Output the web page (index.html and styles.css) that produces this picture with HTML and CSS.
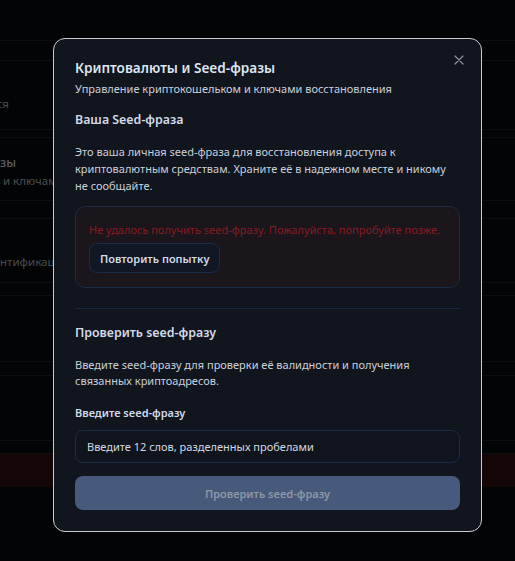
FILE: index.html
```html
<!DOCTYPE html>
<html lang="ru">
<head>
<meta charset="utf-8">
<link rel="stylesheet" href="styles.css">
</head>
<body>
<div class="bg">
  <div class="seg s40"></div>
  <div class="seg s20"></div>
  <div class="seg s69">
    <div class="bgline l1"><span class="pre pre-9"><span>Настройки уведомлений, если понадобится</span></span></div>
  </div>
  <div class="seg s8"></div>
  <div class="seg s63">
    <div class="bgline l2 strong"><span class="pre"><span>Криптовалюты и Seed-фра</span></span><span>зы</span></div>
    <div class="bgline l3"><span class="pre"><span>Управление криптокошельком</span></span><span>&nbsp;и ключами</span></div>
  </div>
  <div class="seg s18"></div>
  <div class="seg s64">
    <div class="bgline l4"><span class="pre"><span>Двухфакторная ауте</span></span><span>нтификаци</span></div>
  </div>
  <div class="seg s13"></div>
  <div class="seg s66"></div>
  <div class="seg s14"></div>
  <div class="seg s65"></div>
  <div class="seg s13"></div>
  <div class="danger"></div>
</div>

<div class="modal">
  <button class="close" aria-label="Закрыть">
    <svg width="10" height="10" viewBox="0 0 10 10"><path d="M1 1L9 9M9 1L1 9" stroke="#8b93a1" stroke-width="1.2" stroke-linecap="round"/></svg>
  </button>
  <h2 class="title">Криптовалюты и Seed-фразы</h2>
  <p class="subtitle">Управление криптокошельком и ключами восстановления</p>

  <h3 class="heading h-first">Ваша Seed-фраза</h3>
  <p class="text">Это ваша личная seed-фраза для восстановления доступа к криптовалютным средствам. Храните её в надежном месте и никому не сообщайте.</p>

  <div class="error-box">
    <p class="error-text">Не удалось получить seed-фразу. Пожалуйста, попробуйте позже.</p>
    <button class="retry">Повторить попытку</button>
  </div>

  <hr class="divider">

  <h3 class="heading">Проверить seed-фразу</h3>
  <p class="text text2">Введите seed-фразу для проверки её валидности и получения связанных криптоадресов.</p>

  <label class="label">Введите seed-фразу</label>
  <div class="input">Введите 12 слов, разделенных пробелами</div>
  <button class="check" disabled>Проверить seed-фразу</button>
</div>
</body>
</html>
```

FILE: styles.css
```css
* { box-sizing: border-box; }
html, body { margin: 0; padding: 0; }
body {
  width: 515px;
  height: 561px;
  overflow: hidden;
  position: relative;
  background: #030405;
  font-family: "Noto Sans", "Open Sans", sans-serif;
}

/* dimmed background page */
.bg { display: flex; flex-direction: column; }
.seg { border-bottom: 1px solid #0c0e13; overflow: hidden; }
.s40 { height: 41px; }
.s20 { height: 20px; }
.s69 { height: 69px; }
.s8 { height: 8px; }
.s63 { height: 63px; }
.s18 { height: 18px; }
.s64 { height: 64px; }
.s13 { height: 13px; }
.s66 { height: 66px; }
.s14 { height: 14px; }
.s65 { height: 65px; }
.danger { height: 33px; background: #140606; }

.bgline {
  display: flex;
  white-space: nowrap;
  font-size: 11.5px;
  line-height: 16px;
  color: #494d54;
}
.pre { width: 0; flex: none; display: flex; justify-content: flex-end; }
.pre-9 { width: 9px; }
.strong { font-size: 12.5px; font-weight: 500; color: #595d64; }
.l1 { margin-top: 35px; }
.l2 { margin-top: 17px; }
.l3 { margin-top: 2px; }
.l4 { margin-top: 35px; }

/* modal */
.modal {
  position: absolute;
  left: 53px;
  top: 38px;
  width: 429px;
  height: 494px;
  background: #11151d;
  border: 1.5px solid #c9ccd1;
  border-radius: 12px;
  padding: 19px 21px 20px 21px;
  display: flex;
  flex-direction: column;
}
.close {
  position: absolute;
  top: 15px;
  right: 16px;
  width: 12px;
  height: 12px;
  padding: 0;
  border: 0;
  background: none;
  display: flex;
  align-items: center;
  justify-content: center;
}
.title {
  margin: 0;
  font-size: 13.6px;
  line-height: 20px;
  font-weight: 600;
  color: #dde5f3;
}
.subtitle {
  margin: 3px 0 0;
  font-size: 11px;
  line-height: 16px;
  color: #c9d1dd;
}
.heading {
  margin: 0;
  font-size: 12.4px;
  line-height: 18px;
  font-weight: 600;
  color: #d2dbe9;
}
.h-first { margin-top: 14px; }
.text {
  margin: 14px 0 0;
  font-size: 11px;
  line-height: 17px;
  color: #c9d1dd;
}
.text2 { line-height: 16px; margin-top: 15px; }

.error-box {
  margin-top: 12px;
  height: 82px;
  border: 1px solid #1b2c48;
  border-radius: 10px;
  background: #1b151c;
  padding: 14px 13px 0;
  display: flex;
  flex-direction: column;
  align-items: flex-start;
}
.error-text {
  margin: 0;
  font-size: 11px;
  line-height: 17px;
  color: #861c20;
  white-space: nowrap;
}
.retry {
  margin-top: 5px;
  height: 30px;
  padding: 0 10px;
  border: 1px solid #1b2c48;
  border-radius: 8px;
  background: #111723;
  font-family: inherit;
  font-size: 11px;
  font-weight: 600;
  color: #d2dbe9;
}

.divider {
  margin: 20px 0 15px;
  border: 0;
  border-top: 1px solid #1a2740;
  height: 0;
}

.label {
  display: block;
  margin-top: 16px;
  font-size: 11px;
  line-height: 16px;
  font-weight: 600;
  color: #d2dbe9;
}
.input {
  margin-top: 9px;
  height: 33px;
  border: 1px solid #1b2c48;
  border-radius: 8px;
  background: #10141c;
  padding: 0 11px;
  display: flex;
  align-items: center;
  font-size: 11px;
  color: #d4dae4;
}
.check {
  margin-top: 13px;
  height: 34px;
  border: 0;
  border-radius: 8px;
  background: #475a7b;
  font-family: inherit;
  font-size: 11px;
  font-weight: 600;
  color: #8d97a7;
}
```
